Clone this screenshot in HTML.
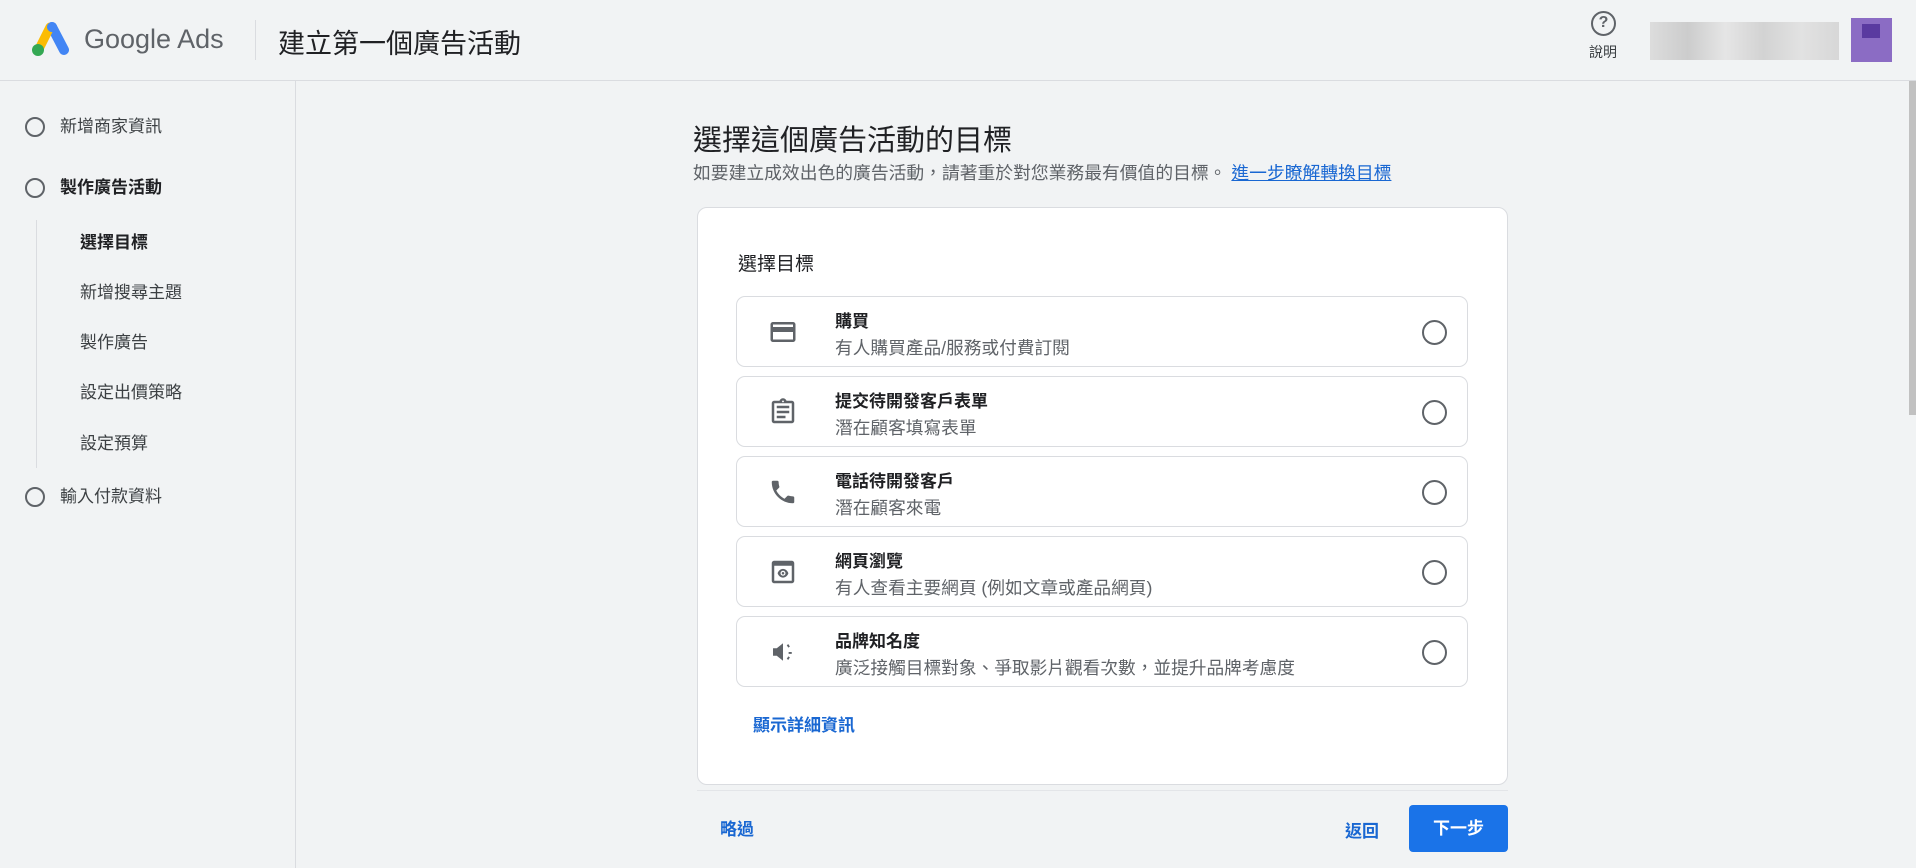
<!DOCTYPE html>
<html><head><meta charset="utf-8"><style>
*{box-sizing:border-box;margin:0;padding:0}
body{width:1916px;height:868px;overflow:hidden;background:#f1f3f4;font-family:"Liberation Sans","Noto Sans CJK TC",sans-serif;color:#3c4043;position:relative}
.abs{position:absolute}
.hdr{left:0;top:0;width:1916px;height:81px;border-bottom:1px solid #dadce0;background:#f1f3f4}
.side{left:0;top:81px;width:296px;height:787px;border-right:1px solid #dadce0}
.rad{width:20px;height:20px;border:2px solid #5f6368;border-radius:50%}
.t17{font-size:17px;line-height:20px;white-space:nowrap}
.card{left:697px;top:207px;width:811px;height:578px;background:#fff;border:1px solid #dadce0;border-radius:10px}
.opt{left:736px;width:732px;height:71px;border:1px solid #dadce0;border-radius:9px;background:#fff}
.opt .tt{position:absolute;left:98px;top:10px;font-size:17px;font-weight:bold;color:#202124;white-space:nowrap}
.opt .ss{position:absolute;left:98px;top:37px;font-size:17.7px;color:#5f6368;white-space:nowrap}
.opt .r{position:absolute;left:685px;top:23px;width:25px;height:25px;border:2px solid #5f6368;border-radius:50%}
.opt svg{position:absolute;left:31px;top:20px}
.blue{color:#1967d2}
</style></head><body>
<div class="abs hdr"></div>
<svg class="abs" style="left:30px;top:21px" width="40" height="36" viewBox="0 0 40 36">
<line x1="22" y1="6" x2="34" y2="29" stroke="#4285f4" stroke-width="10" stroke-linecap="round"/>
<line x1="20" y1="6" x2="9" y2="28" stroke="#fbbc04" stroke-width="9" stroke-linecap="round"/>
<line x1="22" y1="6" x2="34" y2="29" stroke="#4285f4" stroke-width="10" stroke-linecap="round" stroke-dasharray="0.1 100"/>
<circle cx="8" cy="29" r="6" fill="#34a853"/>
</svg>
<div class="abs" style="left:84px;top:24px;font-size:27px;color:#5f6368;white-space:nowrap">Google Ads</div>
<div class="abs" style="left:255px;top:20px;width:1px;height:40px;background:#dadce0"></div>
<div class="abs" style="left:278px;top:22px;font-size:27px;color:#202124;white-space:nowrap">建立第一個廣告活動</div>
<div class="abs" style="left:1591px;top:11px;width:25px;height:25px;border:2.5px solid #5f6368;border-radius:50%;font-size:16px;font-weight:bold;text-align:center;line-height:20px;color:#5f6368">?</div>
<div class="abs" style="left:1589px;top:42px;font-size:14px;color:#3c4043">說明</div>
<div class="abs" style="left:1650px;top:22px;width:189px;height:38px;background:linear-gradient(90deg,#dadada,#c8c8c8 20%,#e4e4e4 40%,#cfcfcf 60%,#e0e0e0 80%,#d4d4d4);opacity:.9"></div>
<div class="abs" style="left:1851px;top:18px;width:41px;height:44px;background:#8b6cc4"></div>
<div class="abs" style="left:1862px;top:24px;width:18px;height:14px;background:#5a3aa0"></div>

<div class="abs side"></div>
<div class="abs rad" style="left:25px;top:117px"></div>
<div class="abs t17" style="left:60px;top:117px">新增商家資訊</div>
<div class="abs rad" style="left:25px;top:178px"></div>
<div class="abs t17" style="left:60px;top:178px;font-weight:bold;color:#202124">製作廣告活動</div>
<div class="abs" style="left:36px;top:220px;width:1px;height:248px;background:#dadce0"></div>
<div class="abs t17" style="left:80px;top:233px;font-weight:bold;color:#202124">選擇目標</div>
<div class="abs t17" style="left:80px;top:283px">新增搜尋主題</div>
<div class="abs t17" style="left:80px;top:333px">製作廣告</div>
<div class="abs t17" style="left:80px;top:383px">設定出價策略</div>
<div class="abs t17" style="left:80px;top:434px">設定預算</div>
<div class="abs rad" style="left:25px;top:487px"></div>
<div class="abs t17" style="left:60px;top:487px">輸入付款資料</div>

<div class="abs" style="left:693px;top:117px;font-size:29px;color:#202124;white-space:nowrap">選擇這個廣告活動的目標</div>
<div class="abs" style="left:693px;top:163px;font-size:17.8px;line-height:20px;white-space:nowrap;color:#5f6368">如要建立成效出色的廣告活動，請著重於對您業務最有價值的目標。 <span class="blue" style="text-decoration:underline">進一步瞭解轉換目標</span></div>

<div class="abs card"></div>
<div class="abs" style="left:738px;top:249px;font-size:19px;color:#202124">選擇目標</div>

<div class="abs opt" style="top:296px"><svg width="30" height="30" viewBox="0 0 24 24"><path fill="#5f6368" d="M20 4H4c-1.1 0-2 .9-2 2v12c0 1.1.9 2 2 2h16c1.1 0 2-.9 2-2V6c0-1.1-.9-2-2-2zm0 14H4v-6h16v6zm0-10H4V6h16v2z"/></svg><div class="tt">購買</div><div class="ss">有人購買產品/服務或付費訂閱</div><div class="r"></div></div>
<div class="abs opt" style="top:376px"><svg width="30" height="30" viewBox="0 0 24 24"><path fill="#5f6368" d="M7 15h7v2H7zm0-4h10v2H7zm0-4h10v2H7zm12-4h-4.18C14.4 1.84 13.3 1 12 1s-2.4.84-2.820 2H5c-1.1 0-2 .9-2 2v14c0 1.1.9 2 2 2h14c1.1 0 2-.9 2-2V5c0-1.1-.9-2-2-2zm-7-.25c.41 0 .75.34.75.75s-.34.75-.75.75-.75-.34-.75-.75.34-.75.75-.75zM19 19H5V5h14v14z"/></svg><div class="tt">提交待開發客戶表單</div><div class="ss">潛在顧客填寫表單</div><div class="r"></div></div>
<div class="abs opt" style="top:456px"><svg width="30" height="30" viewBox="0 0 24 24"><path fill="#5f6368" d="M6.62 10.79c1.44 2.830 3.76 5.14 6.59 6.59l2.2-2.2c.27-.27.67-.36 1.02-.24 1.12.37 2.33.57 3.57.57.55 0 1 .45 1 1V20c0 .55-.45 1-1 1-9.39 0-17-7.61-17-17 0-.55.45-1 1-1h3.5c.55 0 1 .45 1 1 0 1.25.2 2.45.57 3.57.11.35.03.74-.25 1.02l-2.2 2.2z"/></svg><div class="tt">電話待開發客戶</div><div class="ss">潛在顧客來電</div><div class="r"></div></div>
<div class="abs opt" style="top:536px"><svg width="30" height="30" viewBox="0 0 24 24"><path fill="#5f6368" d="M19 3H5c-1.1 0-2 .9-2 2v14c0 1.1.9 2 2 2h14c1.1 0 2-.9 2-2V5c0-1.1-.9-2-2-2zm0 16H5V7h14v12zm-7-9.5c-2 0-3.6 1.4-4.3 3.5.7 2.1 2.3 3.5 4.3 3.5s3.6-1.4 4.3-3.5C15.6 10.9 14 9.5 12 9.5zm0 5.5a2 2 0 1 1 0-4 2 2 0 0 1 0 4zm0-3a1 1 0 1 0 0 2 1 1 0 0 0 0-2z"/></svg><div class="tt">網頁瀏覽</div><div class="ss">有人查看主要網頁 (例如文章或產品網頁)</div><div class="r"></div></div>
<div class="abs opt" style="top:616px"><svg width="30" height="30" viewBox="0 0 24 24"><path fill="#5f6368" d="M4 9v6h3l5 4V5L7 9H4zm12.5 3h2.5v1.5h-2.5zM15 6.5l1.3-.8 1.2 2-1.3.8zM15 17.5l1.2-2 1.3.8-1.2 2z"/></svg><div class="tt">品牌知名度</div><div class="ss">廣泛接觸目標對象、爭取影片觀看次數，並提升品牌考慮度</div><div class="r"></div></div>

<div class="abs blue" style="left:753px;top:711px;font-size:17px;font-weight:bold">顯示詳細資訊</div>
<div class="abs" style="left:697px;top:790px;width:811px;height:1px;background:#e3e5e8"></div>
<div class="abs blue" style="left:720px;top:815px;font-size:17px;font-weight:bold">略過</div>
<div class="abs blue" style="left:1345px;top:817px;font-size:17px;font-weight:bold">返回</div>
<div class="abs" style="left:1409px;top:805px;width:99px;height:47px;background:#1a73e8;border-radius:4px;color:#fff;font-size:17px;font-weight:bold;text-align:center;line-height:47px">下一步</div>
<div class="abs" style="left:1909px;top:81px;width:7px;height:334px;background:#c1c1c1"></div>
</body></html>
